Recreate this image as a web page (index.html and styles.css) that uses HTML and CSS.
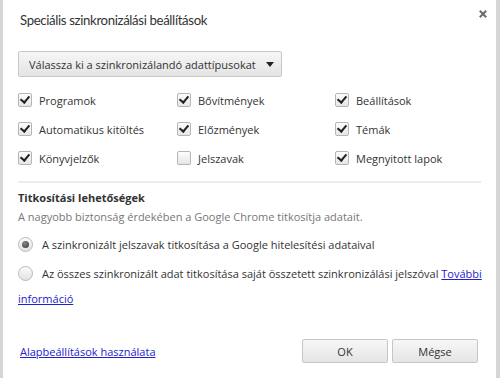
FILE: index.html
```html
<!DOCTYPE html>
<html lang="hu">
<head>
<meta charset="utf-8">
<link rel="stylesheet" href="styles.css">
</head>
<body>
<div class="dialog">
  <div class="header">
    <div class="title">Speciális szinkronizálási beállítások</div>
    <svg class="close" width="8" height="8" viewBox="0 0 8 8"><path d="M0.8 0.8L7.2 7.2M7.2 0.8L0.8 7.2" stroke="#6a6a6a" stroke-width="2"/></svg>
  </div>
  <div class="content">
    <button class="select">Válassza ki a szinkronizálandó adattípusokat <span class="arrow"></span></button>
    <div class="grid">
      <label class="item"><span class="cb on"></span>Programok</label>
      <label class="item"><span class="cb on"></span>Bővítmények</label>
      <label class="item"><span class="cb on"></span>Beállítások</label>
      <label class="item"><span class="cb on"></span>Automatikus kitöltés</label>
      <label class="item"><span class="cb on"></span>Előzmények</label>
      <label class="item"><span class="cb on"></span>Témák</label>
      <label class="item"><span class="cb on"></span>Könyvjelzők</label>
      <label class="item"><span class="cb"></span>Jelszavak</label>
      <label class="item"><span class="cb on"></span>Megnyitott lapok</label>
    </div>
    <div class="sep"></div>
    <div class="heading">Titkosítási lehetőségek</div>
    <div class="desc">A nagyobb biztonság érdekében a Google Chrome titkosítja adatait.</div>
    <div class="radio-row"><span class="rb on"></span>A szinkronizált jelszavak titkosítása a Google hitelesítési adataival</div>
    <div class="radio-row two"><span class="rb"></span>Az összes szinkronizált adat titkosítása saját összetett szinkronizálási jelszóval <a href="#">További információ</a></div>
  </div>
  <div class="footer">
    <a href="#" class="defaults">Alapbeállítások használata</a>
    <div class="buttons">
      <button class="btn">OK</button>
      <button class="btn">Mégse</button>
    </div>
  </div>
</div>
</body>
</html>
```
FILE: styles.css
```css
html, body {
  margin: 0;
  height: 100%;
}
body {
  background: #d6d6d6;
  font-family: "Open Sans", "Noto Sans", sans-serif;
  font-size: 11px;
  color: #333;
}
.dialog {
  background: #fff;
  margin: 0 4px 0 3px;
  height: 378px;
  box-sizing: border-box;
}
.header {
  display: flex;
  justify-content: space-between;
  align-items: flex-start;
  padding: 10px 9px 0 17px;
}
.title {
  font-family: Lato, "Open Sans", sans-serif;
  font-size: 13.2px;
  letter-spacing: -0.35px;
  line-height: 20px;
  color: #333;
}
.close {
  margin-top: 0;
}
.content {
  padding: 0 11px 0 15px;
}
.select {
  margin-top: 21px;
  height: 26px;
  width: 264px;
  font-family: inherit;
  font-size: 11px;
  color: #333;
  border: 1px solid #c8c8c8;
  border-radius: 2px;
  background: linear-gradient(#f6f6f6, #e4e4e4);
  text-align: left;
  padding: 0 0 0 10px;
  display: flex;
  align-items: center;
  gap: 10px;
  white-space: nowrap;
}
.arrow {
  width: 0;
  height: 0;
  border-left: 4px solid transparent;
  border-right: 4px solid transparent;
  border-top: 5px solid #222;
}
.grid {
  display: grid;
  grid-template-columns: 159px 158px auto;
  row-gap: 13px;
  margin-top: 15px;
}
.item {
  display: flex;
  align-items: center;
  height: 16px;
}
.cb {
  width: 12px;
  height: 12px;
  border: 1px solid #b5b5b5;
  border-radius: 2px;
  background: linear-gradient(#fdfdfd, #e6e6e6);
  margin-right: 7px;
  position: relative;
  flex: none;
}
.cb.on::after {
  content: "";
  position: absolute;
  left: 3px;
  top: 0px;
  width: 4px;
  height: 7px;
  border-right: 2px solid #222;
  border-bottom: 2px solid #222;
  transform: rotate(40deg);
}
.sep {
  height: 2px;
  background: #ececec;
  margin: 15px 4px 0 0;
}
.heading {
  font-weight: bold;
  margin-top: 6px;
  line-height: 18px;
}
.desc {
  color: #777;
  line-height: 18px;
  margin-top: 1px;
}
.radio-row {
  margin-top: 6px;
  line-height: 25px;
}
.radio-row.two {
  margin-top: 4px;
}
.rb {
  display: inline-block;
  vertical-align: -3px;
  width: 13px;
  height: 13px;
  border: 1px solid #b9b9b9;
  border-radius: 50%;
  background: linear-gradient(#fbfbfb, #e2e2e2);
  margin: 0 9px 0 0;
  position: relative;
}
.rb.on::after {
  content: "";
  position: absolute;
  left: 3px;
  top: 3px;
  width: 7px;
  height: 7px;
  border-radius: 50%;
  background: radial-gradient(circle at 40% 35%, #888, #333);
}
a {
  color: #2222cc;
  text-decoration: underline;
}
.footer {
  display: flex;
  justify-content: space-between;
  align-items: center;
  padding: 0 18px 0 17px;
  margin-top: 28px;
}
.buttons {
  display: flex;
  gap: 4px;
}
.btn {
  width: 86px;
  height: 24px;
  font-family: inherit;
  font-size: 11px;
  color: #333;
  border: 1px solid #c6c6c6;
  border-radius: 2px;
  background: linear-gradient(#f7f7f7, #e5e5e5);
}
```
